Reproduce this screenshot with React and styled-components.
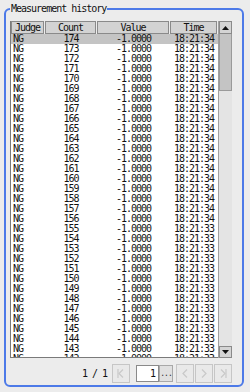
import React from "react";
import styled, { createGlobalStyle } from "styled-components";

const GlobalStyle = createGlobalStyle`
	body {
		margin: 0;
		background: #ececec;
		font-family: "DejaVu Sans Mono", "Liberation Mono", monospace;
		color: #111;
	}
`;

const COLS = "34px 52px 73px 48px";

const buildRows = () => {
	const rows = [];
	for (let n = 174; n >= 142; n--) {
		rows.push({
			id: n,
			judge: "NG",
			count: n,
			value: "-1.0000",
			time: n >= 156 ? "18:21:34" : "18:21:33",
		});
	}
	return rows;
};

const rows = buildRows();

const Chevron = ({ dir, bar }) => (
	<svg width="8" height="9" viewBox="0 0 8 9">
		{dir === "left" ? (
			<polyline points="6,0.5 2,4.5 6,8.5" fill="none" stroke="#c9c9c9" strokeWidth="1.2" />
		) : (
			<polyline points="2,0.5 6,4.5 2,8.5" fill="none" stroke="#c9c9c9" strokeWidth="1.2" />
		)}
		{bar === "left" && <line x1="1" y1="0" x2="1" y2="9" stroke="#c9c9c9" strokeWidth="1.2" />}
		{bar === "right" && <line x1="7" y1="0" x2="7" y2="9" stroke="#c9c9c9" strokeWidth="1.2" />}
	</svg>
);

const Arrow = ({ up }) => (
	<svg width="7" height="4" viewBox="0 0 7 4">
		<polygon points={up ? "0,4 7,4 3.5,0" : "0,0 7,0 3.5,4"} fill="#111" />
	</svg>
);

const App = () => {
	return (
		<>
			<GlobalStyle />
			<Frame>
				<Title>Measurement history</Title>
				<TableArea>
					<Grid>
						<HeaderRow>
							<HeaderCell>Judge</HeaderCell>
							<HeaderCell>Count</HeaderCell>
							<HeaderCell>Value</HeaderCell>
							<HeaderCell>Time</HeaderCell>
						</HeaderRow>
						<Body>
							{rows.map((r, i) => (
								<Row key={r.id} selected={i === 0}>
									<Cell align="left">{r.judge}</Cell>
									<Cell>{r.count}</Cell>
									<Cell>{r.value}</Cell>
									<Cell>{r.time}</Cell>
								</Row>
							))}
						</Body>
					</Grid>
					<ScrollBar>
						<ScrollButton h={13}>
							<Arrow up />
						</ScrollButton>
						<Track>
							<Thumb />
						</Track>
						<ScrollButton h={12}>
							<Arrow />
						</ScrollButton>
					</ScrollBar>
				</TableArea>
				<Pager>
					<PageText>1 / 1</PageText>
					<NavButton>
						<Chevron dir="left" bar="left" />
					</NavButton>
					<PageInput>
						<InputBox>1</InputBox>
						<DotsButton>...</DotsButton>
					</PageInput>
					<NavGroup>
						<NavButton>
							<Chevron dir="left" />
						</NavButton>
						<NavButton>
							<Chevron dir="right" />
						</NavButton>
						<NavButton>
							<Chevron dir="right" bar="right" />
						</NavButton>
					</NavGroup>
				</Pager>
			</Frame>
		</>
	);
};

export default App;

const Frame = styled.fieldset`
	box-sizing: border-box;
	margin: 4px 0 0 4px;
	width: 240px;
	height: 383px;
	padding: 7px 10px 0 4px;
	border: 2px solid #4d7ae8;
	border-radius: 6px;
	display: flex;
	flex-direction: column;
`;

const Title = styled.legend`
	padding: 0 1px;
	font-size: 10px;
	line-height: 10px;
	letter-spacing: -1px;
	color: #111;
`;

const TableArea = styled.div`
	display: flex;
	height: 337px;
`;

const Grid = styled.div`
	width: 208px;
	box-sizing: border-box;
	border-left: 1px solid #7a7a7a;
	border-bottom: 1px solid #7a7a7a;
	background: #fff;
	display: flex;
	flex-direction: column;
	overflow: hidden;
`;

const HeaderRow = styled.div`
	display: grid;
	grid-template-columns: ${COLS};
	height: 13px;
	flex: none;
	background: #ececec;
`;

const HeaderCell = styled.div`
	box-sizing: border-box;
	background: #d3d3d3;
	border: 1px solid #8a8a8a;
	margin-right: 1px;
	font-size: 10px;
	line-height: 11px;
	letter-spacing: -1px;
	text-align: center;
`;

const Body = styled.div`
	flex: 1;
	overflow: hidden;
`;

const Row = styled.div`
	display: grid;
	grid-template-columns: ${COLS};
	height: 10px;
	background: ${({ selected }) => (selected ? "#c4c4c4" : "transparent")};
`;

const Cell = styled.div`
	font-size: 10px;
	line-height: 10px;
	letter-spacing: -1px;
	white-space: nowrap;
	text-align: ${({ align }) => align || "center"};
	padding-left: ${({ align }) => (align === "left" ? "2px" : "0")};
`;

const ScrollBar = styled.div`
	width: 14px;
	display: flex;
	flex-direction: column;
	box-sizing: border-box;
	border-left: 1px solid #a0a0a0;
`;

const ScrollButton = styled.div`
	height: ${({ h }) => h}px;
	flex: none;
	box-sizing: border-box;
	background: #d4d4d4;
	border: 1px solid #8a8a8a;
	display: flex;
	align-items: center;
	justify-content: center;
`;

const Track = styled.div`
	flex: 1;
	background: #e4e4e4;
`;

const Thumb = styled.div`
	height: 57px;
	box-sizing: border-box;
	background: #c4c4c4;
	border: 1px solid #9a9a9a;
	border-top: none;
`;

const Pager = styled.div`
	display: flex;
	align-items: center;
	justify-content: flex-end;
	height: 19px;
	margin-top: 6px;
`;

const PageText = styled.span`
	font-size: 10px;
	letter-spacing: -1px;
	margin-right: 5px;
`;

const NavGroup = styled.div`
	display: flex;
	gap: 1px;
	margin-left: 3px;
`;

const NavButton = styled.div`
	width: 18px;
	height: 19px;
	box-sizing: border-box;
	background: #e9e9e9;
	border: 1px solid #c6c6c6;
	display: flex;
	align-items: center;
	justify-content: center;
`;

const PageInput = styled.div`
	display: flex;
	align-items: center;
	margin-left: 6px;
`;

const InputBox = styled.div`
	width: 23px;
	height: 17px;
	box-sizing: border-box;
	background: #fff;
	border: 1px solid #8a8a8a;
	font-size: 10px;
	line-height: 15px;
	text-align: right;
	padding-right: 2px;
`;

const DotsButton = styled.div`
	width: 14px;
	height: 17px;
	box-sizing: border-box;
	background: #e0e0e0;
	border: 1px solid #a8a8a8;
	font-size: 8px;
	line-height: 15px;
	letter-spacing: -1px;
	text-align: center;
	color: #333;
`;
